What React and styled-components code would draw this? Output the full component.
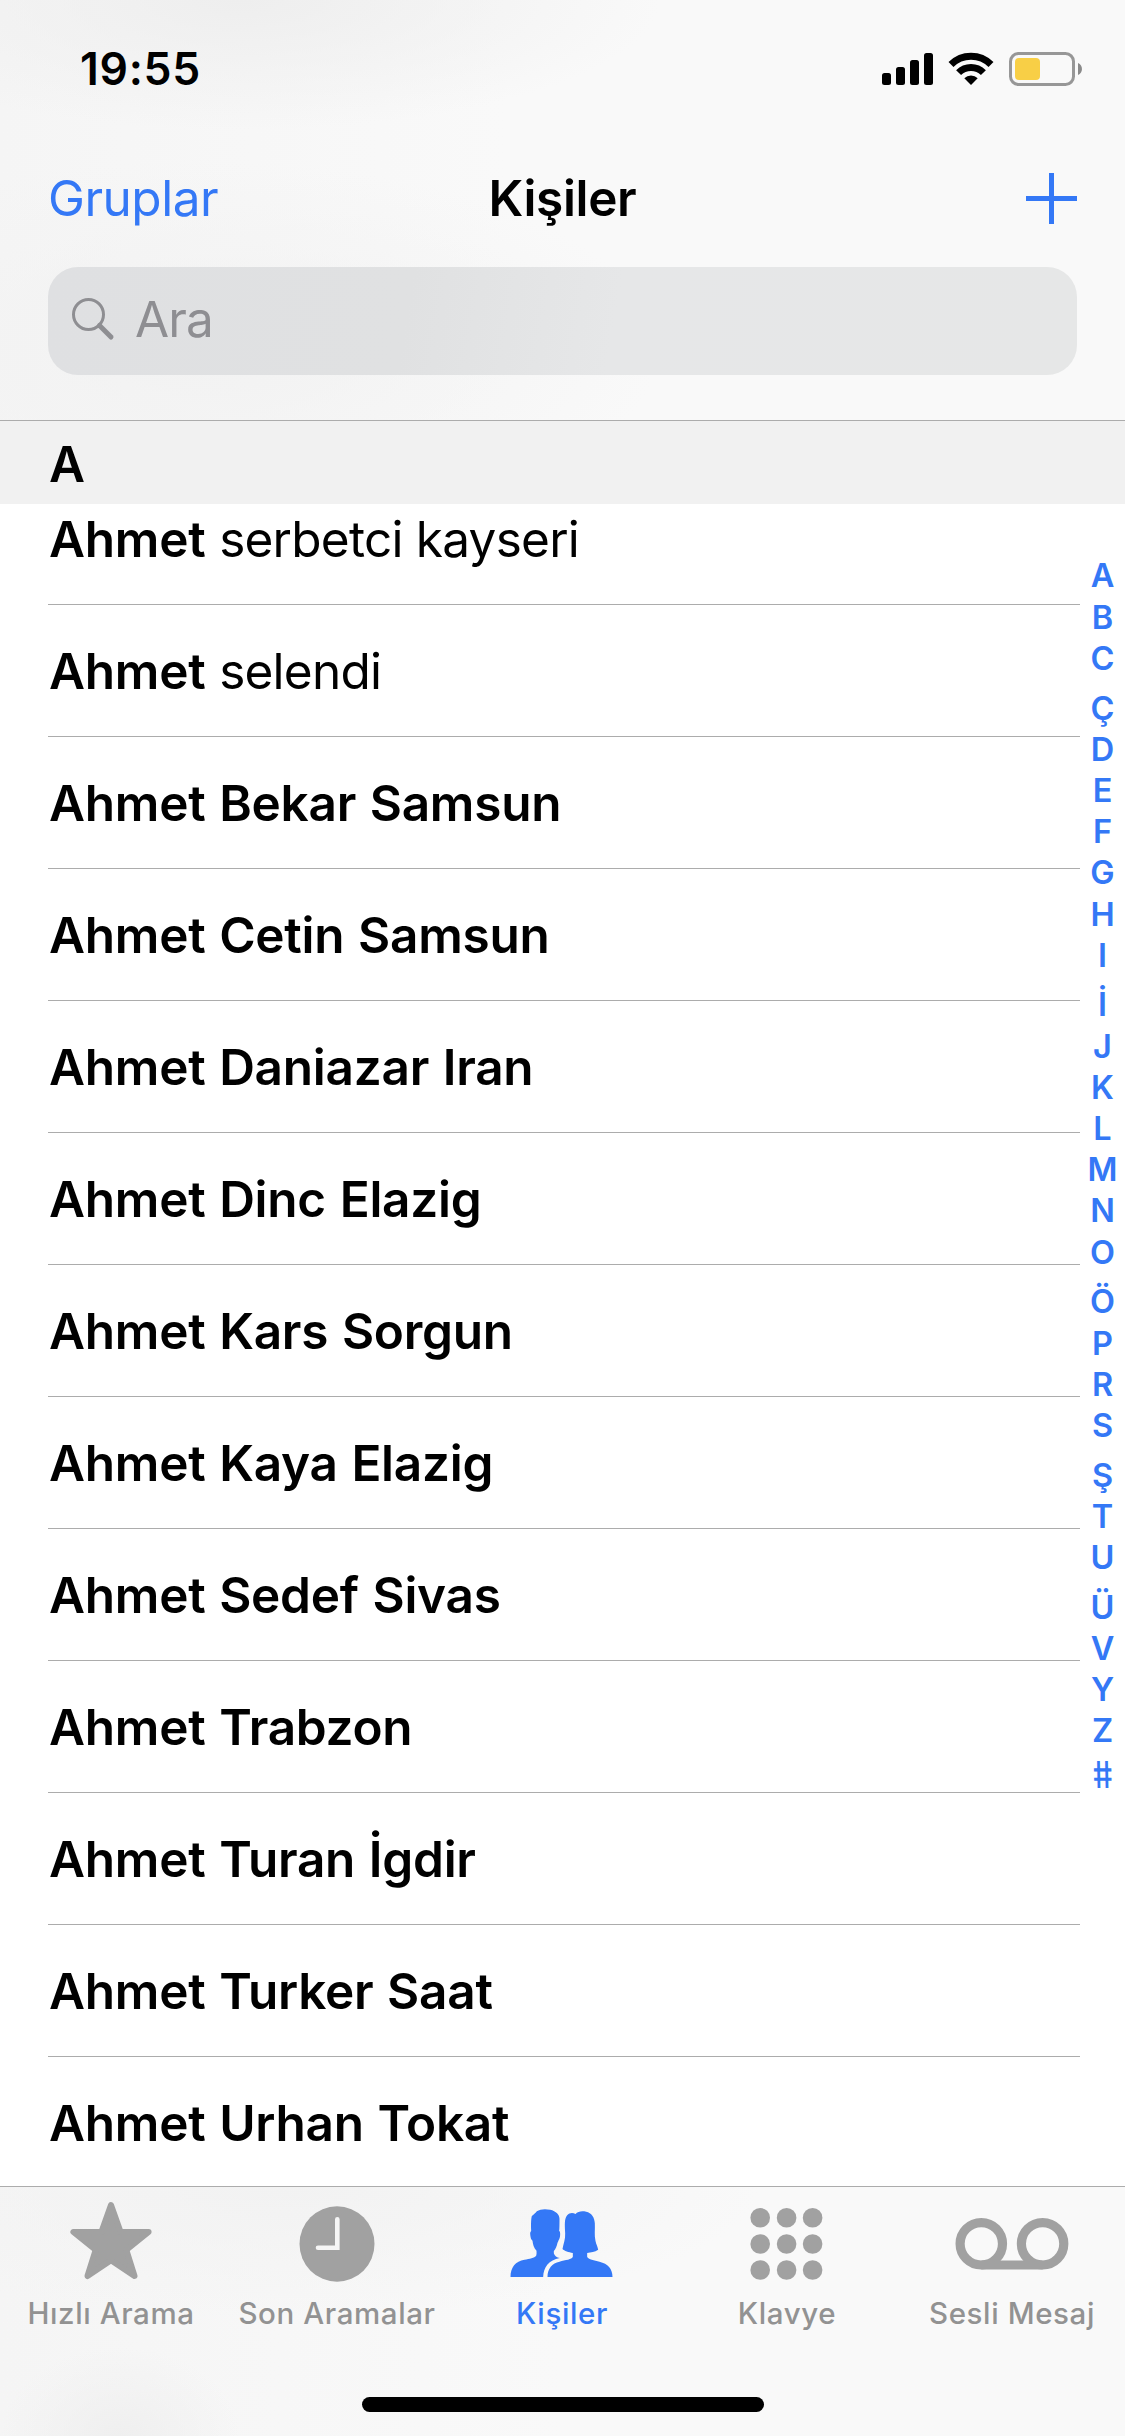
import React from "react";
import styled, { createGlobalStyle } from "styled-components";

const contacts = [
  { first: "Ahmet", rest: "serbetci kayseri", light: true },
  { first: "Ahmet", rest: "selendi", light: true },
  { first: "Ahmet", rest: "Bekar Samsun" },
  { first: "Ahmet", rest: "Cetin Samsun" },
  { first: "Ahmet", rest: "Daniazar Iran" },
  { first: "Ahmet", rest: "Dinc Elazig" },
  { first: "Ahmet", rest: "Kars Sorgun" },
  { first: "Ahmet", rest: "Kaya Elazig" },
  { first: "Ahmet", rest: "Sedef Sivas" },
  { first: "Ahmet", rest: "Trabzon" },
  { first: "Ahmet", rest: "Turan İgdir" },
  { first: "Ahmet", rest: "Turker Saat" },
  { first: "Ahmet", rest: "Urhan Tokat" },
];

const letters = [..."ABCÇDEFGHIİJKLMNOÖPRSŞTUÜVYZ"];

// letters with a mark above or below take a taller cell
const extraSpace = (letter) => ("ÇİÖŞÜ".includes(letter) ? 8.5 : 0);

const StarIcon = () => (
  <TabIcon viewBox="0 0 120 90">
    <path
      d="M60 5 L69.6 32 H97.6 L75.3 50 L83.5 76 L60 60.2 L36.5 76 L44.7 50 L22.4 32 H50.4 Z"
      fill="currentColor"
      stroke="currentColor"
      strokeWidth="6"
      strokeLinejoin="round"
    />
  </TabIcon>
);

const ClockIcon = () => (
  <TabIcon viewBox="0 0 120 90">
    <ellipse cx="60" cy="44" rx="37.5" ry="37.7" fill="currentColor" />
    <path
      d="M60.3 19.2 V47.7 H41"
      fill="none"
      stroke="#f5f5f5"
      strokeWidth="4.6"
      strokeLinecap="round"
    />
  </TabIcon>
);

const PeopleIcon = () => (
  <TabIcon viewBox="67.5 60 360 270">
    <path
      d="M93 291 C93 262 108 243 135 239 C150 236 165 234 170 227 C172 221 171 217 171 212 C163 203 160 192 159 182 C153 178 152 164 152 158 C153 155 154 154 155 152 C154 130 155 115 157 108 C164 102 168 100 172 94 C182 87 196 86 212 89 C230 93 240 104 240 116 C240 130 240 145 239 153 C243 154 243 170 239 178 C237 181 236 186 234 188 C232 198 228 207 223 213 L223 220 C225 228 232 233 241 234 C208 240 192 262 191 291 Z"
      fill="currentColor"
    />
    <path
      d="M204 291 C204 266 218 249 240 245 C258 239 277 239 280 230 L280 219 C268 217 254 213 249 207 C252 190 258 178 257 160 C256 135 254 117 263 106 C270 98 280 98 288 102 C295 94 307 92 320 95 C336 98 345 112 346 130 C347 150 344 165 348 183 C350 193 355 201 356 209 C346 216 334 217 323 219 L323 230 C326 239 345 240 360 245 C385 251 399 266 399 291 Z"
      fill="currentColor"
    />
  </TabIcon>
);

const KeypadIcon = () => (
  <TabIcon viewBox="0 0 120 90">
    {[17.8, 44, 70].map((y) =>
      [33.2, 59.6, 85.6].map((x) => (
        <circle key={`${x}-${y}`} cx={x} cy={y} r="9.8" fill="currentColor" />
      ))
    )}
  </TabIcon>
);

const VoicemailIcon = () => (
  <TabIcon viewBox="0 0 120 90">
    <g fill="none" stroke="currentColor" strokeWidth="9.2">
      <circle cx="29.3" cy="43.8" r="21.2" />
      <circle cx="90.6" cy="43.8" r="21.2" />
      <path d="M29.3 65 H90.6" />
    </g>
  </TabIcon>
);

const tabs = [
  { label: "Hızlı Arama", icon: <StarIcon />, shift: 3 },
  { label: "Son Aramalar", icon: <ClockIcon /> },
  { label: "Kişiler", icon: <PeopleIcon />, active: true },
  { label: "Klavye", icon: <KeypadIcon /> },
  { label: "Sesli Mesaj", icon: <VoicemailIcon /> },
];

const App = () => {
  return (
    <Screen>
      <GlobalStyle />
      <Header>
        <StatusBar>
          <Time>19:55</Time>
          <StatusIcons>
            <svg width="51" height="34" viewBox="0 0 51 34">
              <rect x="0" y="21" width="9" height="12" rx="2.5" />
              <rect x="14" y="15" width="9" height="18" rx="2.5" />
              <rect x="28" y="8" width="9" height="25" rx="2.5" />
              <rect x="42" y="1" width="9" height="32" rx="2.5" />
            </svg>
            <svg width="46" height="34" viewBox="0 0 46 34">
              <g fill="none" stroke="#000" strokeWidth="7">
                <path d="M3 12.5 A28.3 28.3 0 0 1 43 12.5" />
                <path d="M10.6 20.6 A17.5 17.5 0 0 1 35.4 20.6" />
              </g>
              <path d="M23 33 L16.3 26.2 A9.5 9.5 0 0 1 29.7 26.2 Z" />
            </svg>
            <svg width="73" height="34" viewBox="0 0 73 34">
              <rect
                x="1.5"
                y="1.5"
                width="63"
                height="31"
                rx="8"
                fill="none"
                stroke="#979797"
                strokeWidth="3"
              />
              <rect x="6" y="6" width="25" height="22" rx="4" fill="#f8cf46" />
              <path d="M69 11 C74.3 13 74.3 21 69 23 Z" fill="#8a8a8a" />
            </svg>
          </StatusIcons>
        </StatusBar>
        <NavBar>
          <GroupsBtn type="button">Gruplar</GroupsBtn>
          <Title>Kişiler</Title>
          <AddBtn type="button" aria-label="Ekle">
            <svg width="51" height="51" viewBox="0 0 51 51">
              <path d="M25.5 0 V51 M0 25.5 H51" stroke="#3478f6" strokeWidth="5" />
            </svg>
          </AddBtn>
        </NavBar>
        <SearchBox>
          <svg width="44" height="44" viewBox="0 0 44 44">
            <g fill="none" stroke="#8e8e92" strokeLinecap="round">
              <circle cx="17.5" cy="17.5" r="15" strokeWidth="3" />
              <path d="M28.5 28.5 L40 40" strokeWidth="5" />
            </g>
          </svg>
          <Placeholder>Ara</Placeholder>
        </SearchBox>
      </Header>
      <SectionHeader>A</SectionHeader>
      <Main>
        <List>
          {contacts.map(({ first, rest, light }) => (
            <Row key={rest}>
              <Name>
                {first} <Rest $light={light}>{rest}</Rest>
              </Name>
            </Row>
          ))}
        </List>
        <LetterIndex>
          {letters.map((letter) => (
            <Letter key={letter} $extra={extraSpace(letter)}>
              {letter}
            </Letter>
          ))}
          <Hash>#</Hash>
        </LetterIndex>
      </Main>
      <TabBar>
        <Tabs>
          {tabs.map(({ label, icon, active, shift }) => (
            <Tab key={label} $active={active} $shift={shift}>
              {icon}
              <TabLabel $active={active}>{label}</TabLabel>
            </Tab>
          ))}
        </Tabs>
        <HomeIndicator />
      </TabBar>
    </Screen>
  );
};

const GlobalStyle = createGlobalStyle`
  * {
    box-sizing: border-box;
  }
  body {
    margin: 0;
    background: #fff;
  }
  button {
    padding: 0;
    border: none;
    background: none;
    font: inherit;
  }
  svg {
    display: block;
    flex-shrink: 0;
  }
`;

const Screen = styled.div`
  width: 1125px;
  height: 2436px;
  display: flex;
  flex-direction: column;
  overflow: hidden;
  background: #fff;
  color: #000;
  font-family: Inter, "Liberation Sans", sans-serif;
  font-size: 49.5px;
`;

const Header = styled.header`
  height: 421px;
  flex-shrink: 0;
  border-bottom: 1px solid #acacac;
  background: radial-gradient(ellipse 420px 130px at 240px 0, #eeeeee, transparent),
    radial-gradient(ellipse 460px 190px at 200px 350px, #f2f2f2, transparent),
    linear-gradient(90deg, #f5f5f5, #f9f9f9 45%);
`;

const StatusBar = styled.div`
  height: 132px;
  padding: 6px 43px 0 80px;
  display: flex;
  justify-content: space-between;
  align-items: center;
`;

const Time = styled.div`
  font-size: 44.5px;
  font-weight: 600;
  letter-spacing: 0.7px;
`;

const StatusIcons = styled.div`
  display: flex;
  gap: 15px;
`;

const NavBar = styled.nav`
  height: 132px;
  padding: 0 48px;
  display: grid;
  grid-template-columns: 1fr auto 1fr;
  align-items: center;
`;

const GroupsBtn = styled.button`
  justify-self: start;
  color: #3478f6;
  letter-spacing: -0.5px;
`;

const Title = styled.h1`
  margin: 0;
  font-size: inherit;
  font-weight: 600;
  letter-spacing: -0.35px;
`;

const AddBtn = styled.button`
  justify-self: end;
`;

const SearchBox = styled.div`
  height: 108px;
  margin: 3px 48px 0;
  padding: 0 23px 4px;
  display: flex;
  align-items: center;
  gap: 20px;
  border-radius: 30px;
  background: linear-gradient(100deg, #dfe0e2, #e0e1e2 35%, #e6e7e8 55%, #e6e7e7);
`;

const Placeholder = styled.span`
  color: #8e8e92;
  letter-spacing: -0.9px;
`;

const SectionHeader = styled.div`
  height: 83px;
  flex-shrink: 0;
  padding: 3px 49px 0;
  display: flex;
  align-items: center;
  background: #f1f1f1;
  font-weight: 600;
`;

const Main = styled.main`
  height: 1682px;
  flex-shrink: 0;
  display: flex;
  overflow: hidden;
`;

/* scrolled so that the first row is partly under the section header */
const List = styled.div`
  flex: 1;
  margin-top: -31px;
  padding-left: 48px;
`;

const Row = styled.div`
  height: 132px;
  display: flex;
  align-items: center;
  border-bottom: 1px solid #acacac;
`;

const Name = styled.div`
  padding-left: 1px;
  font-weight: 600;
  letter-spacing: -0.25px;
  word-spacing: 1.5px;
  white-space: nowrap;
`;

const Rest = styled.span`
  ${({ $light }) =>
    $light &&
    `
    font-weight: 400;
    letter-spacing: -0.75px;
    word-spacing: 0;
  `}
`;

const LetterIndex = styled.div`
  width: 45px;
  padding-top: 51.4px;
  color: #3478f6;
  font-size: 32.5px;
  font-weight: 600;
  text-align: center;
`;

const Letter = styled.div`
  padding-top: ${({ $extra }) => $extra}px;
  line-height: 41.2px;
`;

/* straightens the slanted number sign */
const Hash = styled.div`
  padding-top: 2px;
  font-size: 37px;
  font-weight: 500;
  line-height: 41.2px;
  transform: skewX(9deg) scaleX(0.85);
`;

const TabBar = styled.footer`
  height: 250px;
  flex-shrink: 0;
  border-top: 1px solid #acacac;
  background: radial-gradient(ellipse 120px 90px at 120px 250px, #efefef, transparent),
    radial-gradient(ellipse 480px 130px at 280px 0, #f2f2f2, transparent),
    linear-gradient(90deg, #f5f5f5, #f9f9f9 50%);
`;

const Tabs = styled.div`
  height: 210px;
  display: grid;
  grid-template-columns: repeat(5, 225px);
`;

const Tab = styled.div`
  padding-top: 13px;
  padding-right: ${({ $shift = 1 }) => $shift}px;
  display: flex;
  flex-direction: column;
  align-items: center;
  color: ${({ $active }) => ($active ? "#3478f6" : "#a1a1a1")};
`;

const TabIcon = styled.svg`
  width: 120px;
  height: 90px;
`;

const TabLabel = styled.span`
  margin-top: 5px;
  color: ${({ $active }) => ($active ? "#3478f6" : "#929292")};
  font-size: 29.5px;
  font-weight: 500;
  line-height: 37px;
  letter-spacing: 0.6px;
  white-space: nowrap;
`;

const HomeIndicator = styled.div`
  width: 402px;
  height: 15px;
  margin: 0 auto;
  border-radius: 8px;
  background: #000;
`;

export default App;
